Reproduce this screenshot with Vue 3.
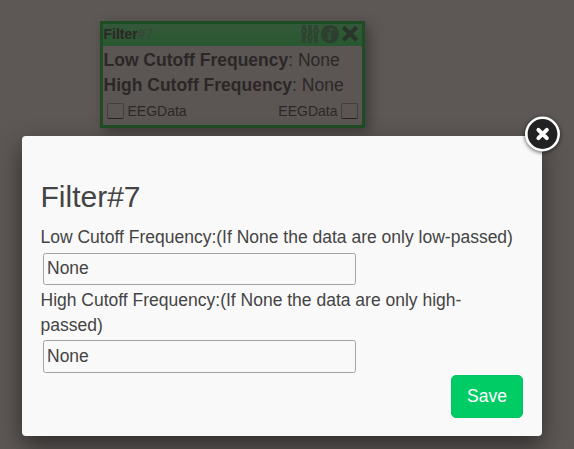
<script setup>
import { ref } from 'vue'

const fields = ref([
  { name: 'Low Cutoff Frequency', hint: '(If None the data are only low-passed)', value: 'None' },
  { name: 'High Cutoff Frequency', hint: '(If None the data are only high-passed)', value: 'None' },
])
</script>

<template>
  <main class="canvas">
    <section class="node">
      <header class="node-head">
        <span class="node-title"><b>Filter</b><span class="node-id">#7</span></span>
        <span class="tools">
          <svg width="18" height="20" viewBox="0 0 18 20">
            <g fill="none" stroke="#304432" stroke-width="3.8">
              <path d="M3 1v4M3 9v10M9 1v10M9 15v4M15 1v4M15 9v10" />
            </g>
            <g fill="none" stroke="#304432" stroke-width="2">
              <circle cx="3" cy="7" r="2.1" /><circle cx="9" cy="13" r="2.1" /><circle cx="15" cy="7" r="2.1" />
            </g>
          </svg>
          <svg width="20" height="20" viewBox="0 0 20 20">
            <circle cx="10" cy="10" r="9.2" fill="#2d402f" />
            <circle cx="11.2" cy="5.3" r="1.6" fill="#35503a" />
            <path d="M7.5 8.5h4.2l-1.5 6.3 2-.7-.3 1.2-3.4 1.1-1-.7 1.3-5.7-1.6-.3z" fill="#35503a" />
          </svg>
          <svg width="18" height="20" viewBox="0 0 18 20">
            <path d="M2.3 3.2l13.4 13M15.7 3.2l-13.4 13" stroke="#29342a" stroke-width="4" />
          </svg>
        </span>
      </header>
      <div class="node-body">
        <div v-for="f in fields" :key="f.name" class="prop"><b>{{ f.name }}</b>: {{ f.value }}</div>
      </div>
      <footer class="ports">
        <span class="port"><i class="socket"></i>EEGData</span>
        <span class="port">EEGData<i class="socket"></i></span>
      </footer>
    </section>

    <form class="dialog" @submit.prevent>
      <button type="button" class="close" aria-label="Close">
        <svg width="38" height="38" viewBox="0 0 38 38">
          <circle cx="18.5" cy="19" r="16.2" fill="#222" stroke="#fff" stroke-width="2.6" />
          <path d="M14.4 14.8l8.4 8.4M22.8 14.8l-8.4 8.4" stroke="#fff" stroke-width="4" stroke-linecap="round" />
        </svg>
      </button>
      <h3>Filter#7</h3>
      <label v-for="f in fields" :key="f.name">
        <span>{{ f.name }}:{{ f.hint }}</span>
        <input v-model="f.value" type="text" />
      </label>
      <div class="actions"><button type="submit" class="save">Save</button></div>
    </form>
  </main>
</template>

<style>
body { background: #5d5856; overflow: hidden; }
</style>

<style scoped>
* { box-sizing: border-box; }
.canvas {
  position: relative;
  height: 449px;
  overflow: hidden;
  background: #5d5856;
  font: 17.5px/25px "Liberation Sans", Arial, sans-serif;
}
.node {
  position: absolute;
  left: 100px;
  top: 21px;
  width: 265px;
  height: 107px;
  border: 3px solid #1e4d25;
  background: #5b5654;
  color: #2c2726;
  box-shadow: 4px 4px 12px rgba(0, 0, 0, .35);
}
.node-head {
  display: flex;
  height: 22px;
  padding: 0 3px 0 .5px;
  background: linear-gradient(#34583a, #28582f);
  font-size: 14px;
  line-height: 20px;
}
.node-id { color: #3b433b; }
.tools { display: flex; gap: 1px; margin-left: auto; }
.tools svg { display: block; }
.node-body { padding: 2px 0 0 .5px; }
.prop { height: 25px; white-space: nowrap; }
.ports {
  display: flex;
  justify-content: space-between;
  padding: 3px 4px 0;
  font-size: 14px;
  line-height: 20px;
}
.port { display: flex; align-items: center; gap: 3.5px; height: 20px; line-height: 20px; }
.socket {
  width: 17px;
  height: 16px;
  border: 1px solid #433e3c;
  border-bottom-color: #292423;
  border-radius: 2px;
}
.dialog {
  position: absolute;
  left: 22px;
  top: 136px;
  width: 520px;
  height: 300px;
  padding: 40px 19px 0 18.5px;
  border-radius: 4px;
  background: #f9f9f9;
  color: #444;
  box-shadow: 0 10px 25px rgba(0, 0, 0, .5);
}
.close {
  position: absolute;
  top: -21px;
  right: -20px;
  width: 38px;
  height: 38px;
  padding: 0;
  border: 0;
  background: none;
}
.close svg { display: block; overflow: visible; filter: drop-shadow(0 1px 2px rgba(0, 0, 0, .65)); }
h3 { margin: 0 0 8.2px; font-size: 30px; line-height: 41px; font-weight: 400; }
label { display: block; }
label span { display: block; }
input {
  display: block;
  width: 313px;
  height: 32.5px;
  margin: 2.4px 2.5px 2.6px;
  padding: 0 3px .6px;
  border: 1px solid #a3a3a3;
  border-radius: 2.5px;
  background: #f9f9f9;
  color: #444;
  font: inherit;
}
.actions { display: flex; justify-content: flex-end; }
.save {
  width: 72px;
  height: 43px;
  padding: 0;
  border: 1px solid #00c462;
  border-radius: 5px;
  background: #00cc66;
  color: #fff;
  font: inherit;
}
</style>
